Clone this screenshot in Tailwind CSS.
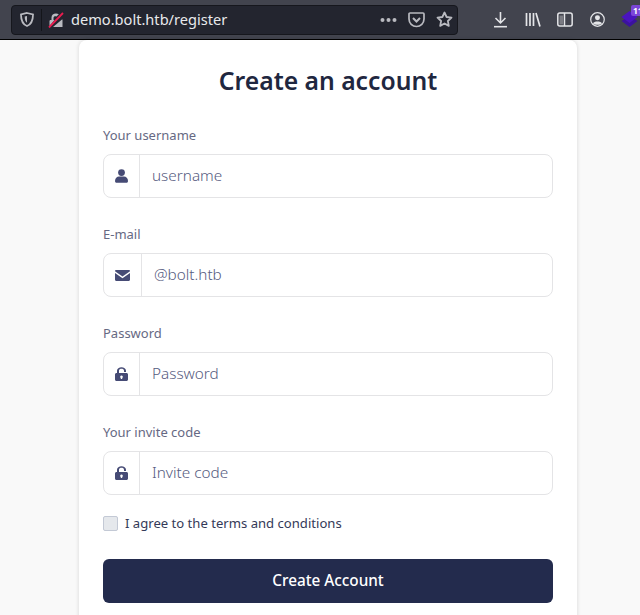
<!DOCTYPE html>
<html>
<head>
<meta charset="utf-8">
<script src="https://cdn.jsdelivr.net/npm/@tailwindcss/browser@4"></script>
</head>
<body class="h-[615px] w-[640px] overflow-hidden bg-[#f9f9f9] font-['Noto_Sans',sans-serif]">
<header class="flex h-10 items-center border-b border-black bg-[#42444e] pl-[11px]">
  <div class="flex h-[30px] w-[448px] items-center rounded-[4px] border border-[#16171d] bg-[#23252f] pl-2 pr-[4px]">
    <svg class="h-[15px] w-[14px] shrink-0" viewBox="0 0 14 15" fill="none"><path d="M7 1 13 2.500c0 6-1.500 9.800-6 11.500C2.500 12.300 1 8.500 1 2.500z" stroke="#b9bac0" stroke-width="1.800"/><path d="M7 4v6.800c-1.500-1-2.300-3-2.300-6.200z" fill="#b9bac0"/></svg>
    <span class="ml-[7px] h-[22px] w-px bg-[#14151a]"></span>
    <svg class="ml-[6px] h-[16px] w-[16px] shrink-0" viewBox="0 0 16 16"><path d="M2 8h1.500V5.500C3.500 3 5.500 1.500 8 1.500c1 0 2 .3 2.800.8L8.500 4.500C7 3.800 5.500 4.500 5.500 6v2h1L1.500 14V9z" fill="#b9bac0"/><path d="M5 15 14 7.500h.5V15z" fill="#b9bac0"/><path d="M1 15.500 15 1" stroke="#ea1d4f" stroke-width="1.800"/></svg>
    <span class="ml-[7px] text-[14.600px] leading-none text-[#e8e9ec]">demo.bolt.htb/register</span>
    <svg class="ml-auto h-[6px] w-[17px]" viewBox="0 0 17 6" fill="#b9bac0"><circle cx="2.500" cy="3" r="2"/><circle cx="8.500" cy="3" r="2"/><circle cx="14.500" cy="3" r="2"/></svg>
    <svg class="ml-[11px] h-[16px] w-[17px]" viewBox="0 0 17 16" fill="none" stroke="#b9bac0" stroke-width="1.700"><path d="M2 1h13a1 1 0 0 1 1 1v5a7.500 7.500 0 0 1-15 0V2a1 1 0 0 1 1-1z"/><path d="m5 6 3.500 3.500L12 6" stroke-width="2"/></svg>
    <svg class="ml-[11px] h-[17px] w-[17px]" viewBox="0 0 17 17" fill="none" stroke="#b9bac0" stroke-width="1.800" stroke-linejoin="round"><path d="m8.500 1.500 2.100 4.500 4.900.6-3.600 3.400.9 4.900-4.300-2.400-4.300 2.400.9-4.900L1.500 6.600l4.900-.6z"/></svg>
  </div>
  <svg class="ml-[35px] h-[17px] w-[15px]" viewBox="0 0 15 17" fill="none" stroke="#e4e5e8" stroke-width="1.600"><path d="M7.500 1v10.500M2.500 7l5 5 5-5"/><path d="M1 15.700h13"/></svg>
  <svg class="ml-[17px] h-[15px] w-[16px]" viewBox="0 0 16 15" fill="none" stroke="#e4e5e8" stroke-width="1.700"><path d="M1.500 1v13M5 1v13M8.500 1v13M11 1l4 13.500"/></svg>
  <svg class="ml-[16px] h-[15px] w-[16px]" viewBox="0 0 16 15" fill="none" stroke="#e4e5e8" stroke-width="1.500"><rect x=".8" y="1" width="14.400" height="13" rx="2"/><path d="M7.500 1v13"/><path d="M2.500 3.500h3.500v9H2.500z" fill="#e4e5e8" fill-opacity=".35" stroke="none"/></svg>
  <svg class="ml-[17px] h-[15px] w-[15px]" viewBox="0 0 15 15" fill="none" stroke="#e4e5e8" stroke-width="1.200"><circle cx="7.500" cy="7.500" r="6.800"/><circle cx="7.500" cy="5.800" r="2.500" fill="#e4e5e8" stroke="none"/><path d="M3 11.500c1-2.500 8-2.500 9 0-1.500 1.800-7.500 1.800-9 0z" fill="#e4e5e8" stroke="none"/></svg>
  <div class="relative ml-[16px] h-[20px] w-[19px] shrink-0">
    <svg class="absolute left-0 top-[1px] h-[16px] w-[17px]" viewBox="0 0 17 16"><path d="M8.500 5 16.500 10 8.500 16 .5 10z" fill="#3b129e"/><path d="M8.500 0 16.500 6 8.500 12 .5 6z" fill="#4a14bf"/></svg>
    <span class="absolute left-[10px] top-[-5px] h-[11px] w-[14px] rounded-l-[2px] bg-[#7b46d8] pl-[2px] text-[8.500px] font-bold leading-[11px] text-white">11</span>
  </div>
</header>
<main class="ml-[79px] h-[600px] w-[498px] rounded-t-[8px] bg-white px-6 pt-[24px] shadow-[0_0_4px_rgba(0,0,0,0.14)]">
  <h1 class="mb-[28px] text-center text-[24.700px] font-semibold leading-[34px] text-[#1f2740]">Create an account</h1>
  <form class="flex flex-col">
    <label class="mb-[9px] h-[19px] text-[13px] leading-[19px] text-[#666983]">Your username</label>
    <div class="mb-[27px] flex h-[44px] items-center rounded-[8px] border border-[#e4e4e6] bg-white">
      <span class="flex h-full w-[36px] shrink-0 items-center justify-center border-r border-[#e4e4e6]">
        <svg class="h-[14px] w-[13px]" viewBox="0 0 13 14" fill="#464b75"><circle cx="6.500" cy="3.600" r="3.400"/><path d="M0 12c0-3 2-4.500 4-4.500h5c2 0 4 1.500 4 4.500 0 1-.7 1.800-1.500 1.800h-10C.7 13.800 0 13 0 12z"/></svg>
      </span>
      <span class="pb-[2px] pl-3 text-[15.300px] font-light text-[#565b80]">username</span>
    </div>
    <label class="mb-[9px] h-[19px] text-[13px] leading-[19px] text-[#666983]">E-mail</label>
    <div class="mb-[27px] flex h-[44px] items-center rounded-[8px] border border-[#e4e4e6] bg-white">
      <span class="flex h-full w-[38px] shrink-0 items-center justify-center border-r border-[#e4e4e6]">
        <svg class="h-[11px] w-[15px]" viewBox="0 0 15 11" fill="#464b75"><path d="M1.200 0h12.600c.8 0 1.200.5 1.200 1.200L7.500 6.500 0 1.200C0 .5.400 0 1.200 0z"/><path d="M0 3v6.800C0 10.500.5 11 1.200 11h12.600c.7 0 1.200-.5 1.200-1.200V3L7.500 8.200z"/></svg>
      </span>
      <span class="pb-[2px] pl-3 text-[15.300px] font-light text-[#565b80]">@bolt.htb</span>
    </div>
    <label class="mb-[9px] h-[19px] text-[13px] leading-[19px] text-[#666983]">Password</label>
    <div class="mb-[27px] flex h-[44px] items-center rounded-[8px] border border-[#e4e4e6] bg-white">
      <span class="flex h-full w-[36px] shrink-0 items-center justify-center border-r border-[#e4e4e6]">
        <svg class="h-[14px] w-[13px]" viewBox="0 0 13 14" fill="#464b75"><path fill-rule="evenodd" d="M2 6V3.800C2-1 11-1 11 3.800V5H9V3.800C9 1.200 4 1.200 4 3.800V6h7.500c.8 0 1.500.6 1.500 1.500v5c0 .8-.7 1.500-1.500 1.500h-10C.7 14 0 13.300 0 12.500v-5C0 6.600.7 6 1.500 6zm4.500 2.500a1.300 1.300 0 0 0-.7 2.400v1.100h1.400v-1.100a1.300 1.300 0 0 0-.7-2.400z"/></svg>
      </span>
      <span class="pb-[2px] pl-3 text-[15.300px] font-light text-[#565b80]">Password</span>
    </div>
    <label class="mb-[9px] h-[19px] text-[13px] leading-[19px] text-[#666983]">Your invite code</label>
    <div class="mb-[19px] flex h-[44px] items-center rounded-[8px] border border-[#e4e4e6] bg-white">
      <span class="flex h-full w-[36px] shrink-0 items-center justify-center border-r border-[#e4e4e6]">
        <svg class="h-[14px] w-[13px]" viewBox="0 0 13 14" fill="#464b75"><path fill-rule="evenodd" d="M2 6V3.800C2-1 11-1 11 3.800V5H9V3.800C9 1.200 4 1.200 4 3.800V6h7.500c.8 0 1.500.6 1.500 1.500v5c0 .8-.7 1.500-1.500 1.500h-10C.7 14 0 13.300 0 12.500v-5C0 6.600.7 6 1.500 6zm4.500 2.500a1.300 1.300 0 0 0-.7 2.400v1.100h1.400v-1.100a1.300 1.300 0 0 0-.7-2.400z"/></svg>
      </span>
      <span class="pb-[2px] pl-3 text-[15.300px] font-light text-[#565b80]">Invite code</span>
    </div>
    <div class="mb-[27px] flex h-[18px] items-center">
      <span class="h-[15px] w-[15px] rounded-[2px] border border-[#c3c9d5] bg-[#e5e8ec]"></span>
      <span class="ml-[7px] pt-[2px] text-[13.100px] text-[#343a58]">I agree to the terms and conditions</span>
    </div>
    <button type="button" class="h-[44px] rounded-[6px] bg-[#232b4d] pb-[2px] text-[15.300px] font-medium text-white">Create Account</button>
  </form>
</main>
</body>
</html>
